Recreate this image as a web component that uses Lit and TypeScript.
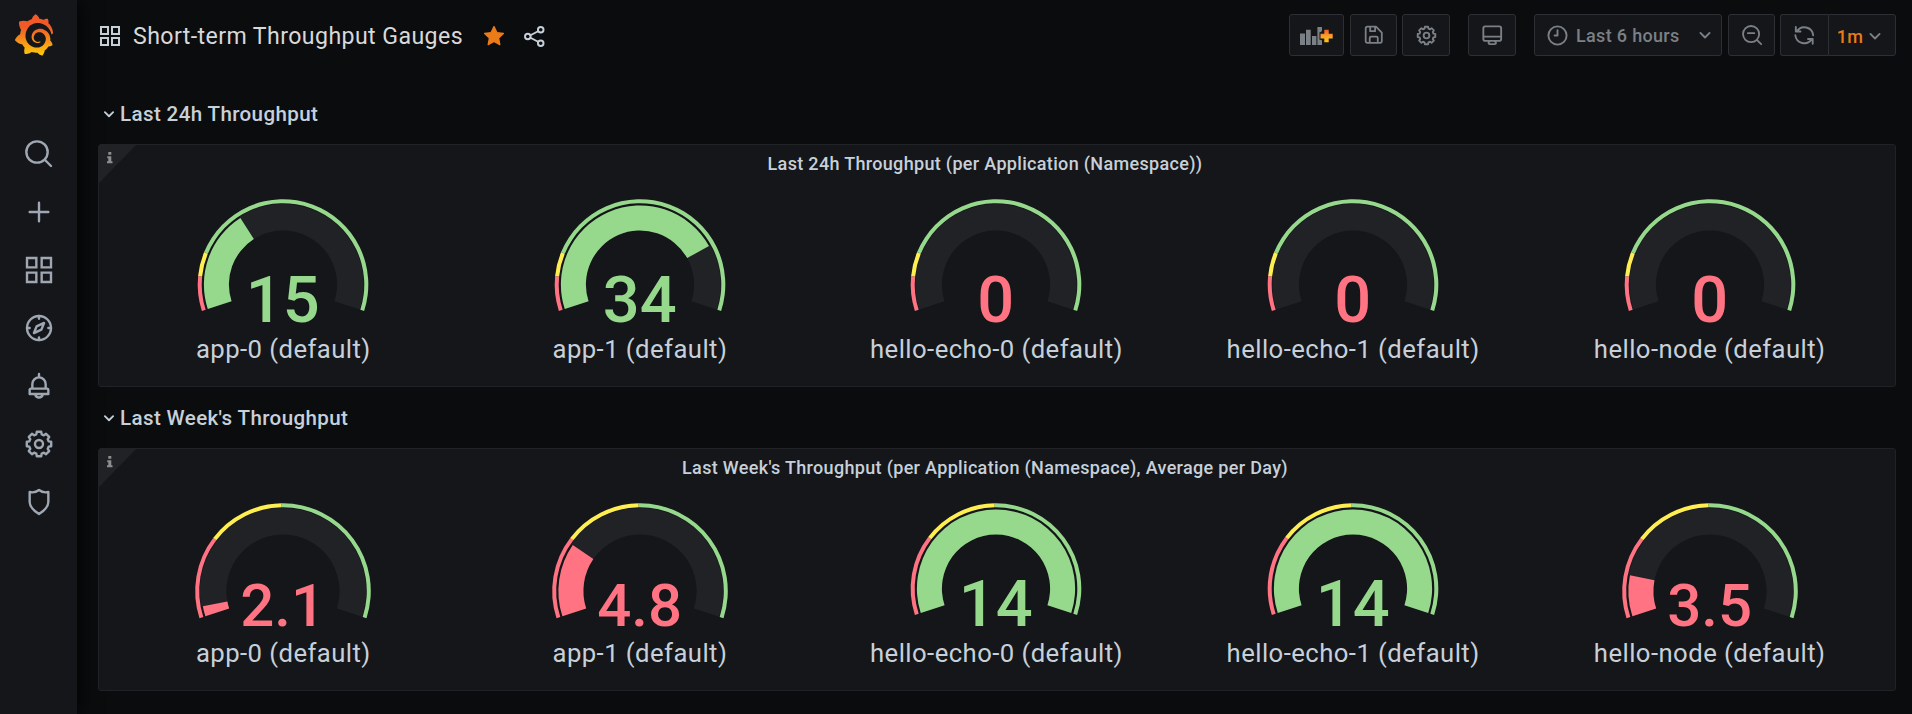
import { LitElement, html, svg, css } from 'lit';
import { customElement, property } from 'lit/decorators.js';

const RED = '#ff7383';
const YELLOW = '#ffee52';
const GREEN = '#96d98d';

type Gauge = { label: string; value: string; frac: number; color: string };
type Scale = { red: number; yellow: number };

// Point on the dial: fraction 0..1 sweeps 216 degrees starting 18 degrees below the left horizon.
const point = (r: number, f: number) => {
  const a = ((198 - 216 * f) * Math.PI) / 180;
  return `${(r * Math.cos(a)).toFixed(2)} ${(-r * Math.sin(a)).toFixed(2)}`;
};

const band = (outer: number, inner: number, from: number, to: number) => {
  const large = (to - from) * 216 > 180 ? 1 : 0;
  return `M${point(outer, from)}A${outer} ${outer} 0 ${large} 1 ${point(outer, to)}L${point(inner, to)}A${inner} ${inner} 0 ${large} 0 ${point(inner, from)}Z`;
};

const gearPath = () => {
  const pts: string[] = [];
  for (let i = 0; i < 8; i++) {
    const c = (i * 45 * Math.PI) / 180;
    for (const [d, r] of [[-0.27, 7.5], [-0.18, 9.3], [0.18, 9.3], [0.27, 7.5]]) {
      pts.push(`${(12 + r * Math.sin(c + d)).toFixed(2)} ${(12 - r * Math.cos(c + d)).toFixed(2)}`);
    }
  }
  return 'M' + pts.join('L') + 'Z';
};

const LOGO =
  'M342,161.2c-0.6-6.1-1.6-13.1-3.6-20.9c-2-7.7-5-16.2-9.4-25c-4.4-8.8-10.1-17.9-17.5-26.8c-2.9-3.5-6.1-6.9-9.5-10.2c5.1-20.3-6.2-37.9-6.2-37.9c-19.5-1.2-31.9,6.1-36.5,9.4c-0.8-0.3-1.5-0.7-2.3-1c-3.3-1.3-6.7-2.6-10.3-3.7c-3.5-1.1-7.1-2.1-10.8-3c-3.7-0.9-7.4-1.6-11.2-2.2c-0.7-0.1-1.3-0.2-2-0.3c-8.5-27.2-32.9-38.6-32.9-38.6c-27.3,17.3-32.4,41.5-32.4,41.5s-0.1,0.5-0.3,1.4c-1.5,0.4-3,0.9-4.5,1.3c-2.1,0.6-4.2,1.4-6.2,2.2c-2.1,0.8-4.1,1.6-6.2,2.5c-4.1,1.8-8.2,3.8-12.2,6c-3.9,2.2-7.7,4.6-11.4,7.1c-0.5-0.2-1-0.4-1-0.4c-37.8-14.4-71.3,2.9-71.3,2.9c-3.1,40.2,15.1,65.5,18.7,70.1c-0.9,2.5-1.7,5-2.5,7.5c-2.8,9.1-4.9,18.4-6.2,28.1c-0.2,1.4-0.4,2.8-0.5,4.2C18.8,192.7,8.5,228,8.5,228c29.1,33.5,63.1,35.6,63.1,35.6c0,0,0.1-0.1,0.1-0.1c4.3,7.7,9.3,15,14.9,21.9c2.4,2.9,4.8,5.6,7.4,8.3c-10.6,30.4,1.5,55.6,1.5,55.6c32.4,1.2,53.7-14.2,58.2-17.7c3.2,1.1,6.5,2.1,9.8,2.9c10,2.6,20.2,4.1,30.4,4.5c2.5,0.1,5.1,0.2,7.6,0.1l1.2,0l0.8,0l1.6,0l1.6-0.1l0,0.1c15.3,21.8,42.1,24.9,42.1,24.9c19.1-20.1,20.2-40.1,20.2-44.4l0,0c0,0,0-0.1,0-0.3c0-0.4,0-0.6,0-0.6l0,0c0-0.3,0-0.6,0-0.9c4-2.8,7.8-5.8,11.4-9.1c7.6-6.9,14.3-14.8,19.9-23.3c0.5-0.8,1-1.6,1.5-2.4c21.6,1.2,36.9-13.4,36.9-13.4c-3.6-22.5-16.4-33.5-19.1-35.6l0,0c0,0-0.1-0.1-0.3-0.2c-0.2-0.1-0.2-0.2-0.2-0.2c0,0,0,0,0,0c-0.1-0.1-0.3-0.2-0.5-0.3c0.1-1.4,0.2-2.7,0.3-4.1c0.2-2.4,0.2-4.9,0.2-7.3l0-1.8l0-0.9l0-0.5l-0.1-2.1l-0.1-2c0-0.7-0.1-1.3-0.2-1.9c-0.1-0.6-0.1-1.3-0.2-1.9l-0.2-1.9l-0.3-1.9c-0.4-2.5-0.8-4.9-1.4-7.4c-2.3-9.7-6.1-18.9-11-27.2c-5-8.3-11.2-15.6-18.3-21.8c-7-6.2-14.9-11.2-23.1-14.9c-8.3-3.7-16.9-6.1-25.5-7.2c-4.3-0.6-8.6-0.8-12.9-0.7l-3.2,0l-1.6,0.1c-0.6,0-1.2,0.1-1.7,0.1c-2.2,0.2-4.4,0.5-6.5,0.9c-8.6,1.6-16.7,4.7-23.8,9c-7.1,4.3-13.3,9.6-18.3,15.6c-5,6-8.9,12.7-11.6,19.6c-2.7,6.9-4.2,14.1-4.6,21c-0.1,1.7-0.1,3.5-0.1,5.2c0,0.4,0,0.9,0,1.3l0.1,1.4c0.1,0.8,0.1,1.7,0.2,2.5c0.3,3.5,1,6.9,1.9,10.1c1.9,6.5,4.9,12.4,8.6,17.4c3.7,5,8.2,9.1,12.9,12.4c4.7,3.2,9.8,5.5,14.8,7c5,1.5,10,2.1,14.7,2.1c1.2,0,2.4,0,3.5-0.1c3-0.2,5.6-0.7,8.2-1.6c2-0.7,4-1.5,5.7-2.4c1.8-0.9,3.4-2,5-3c0.4-0.3,0.9-0.6,1.3-1c1.6-1.3,1.9-3.7,0.6-5.3c-1.1-1.4-3.1-1.8-4.7-0.9c-0.4,0.2-0.8,0.4-1.2,0.6c-1.4,0.7-2.8,1.3-4.3,1.8c-1.5,0.5-3.1,0.9-4.7,1.2c-4,0.5-7,0.5-10.3,0.1c-3.7-0.5-7.4-1.6-10.9-3.2c-3.6-1.6-7-3.8-10.1-6.6c-3.1-2.8-5.8-6.1-7.9-9.9c-2.1-3.8-3.6-8-4.3-12.4c-0.3-2.2-0.5-4.5-0.4-6.7c0.1-2.4,0.3-4.7,0.7-7.1c1.7-9.6,6.5-19,13.9-26.1c1.9-1.8,3.9-3.4,6-4.9c2.1-1.5,4.4-2.8,6.8-3.9c2.4-1.1,4.8-2,7.4-2.7c2.5-0.7,5.1-1.1,7.8-1.4c2.7-0.2,5.4-0.3,8.2-0.1c2.9,0.2,5.7,0.6,8.5,1.3c5.6,1.2,11.1,3.3,16.2,6.1c10.2,5.7,18.9,14.5,24.2,25.1c2.7,5.3,4.6,11,5.5,16.9c0.5,3.7,0.8,7.3,0.7,10.9c-0.2,4.2-0.5,8.2-1.4,12.2c-0.3,1.6-0.7,3.2-1.1,4.7c-0.8,3.1-1.8,6.2-3,9.3c-2.4,6-5.6,11.8-9.4,17.1c-7.7,10.6-18.2,19.2-30.2,24.7c-6,2.7-12.3,4.7-18.8,5.7c-6.7,1-13,1.2-20,0.7c-7-0.5-13.9-1.8-20.7-3.7c-6.7-1.9-13.2-4.6-19.4-7.8c-12.3-6.6-23.4-15.6-32-26.5c-4.3-5.4-8.1-11.3-11.2-17.4c-3.1-6.1-5.6-12.6-7.4-19.1c-1.8-6.6-2.9-13.3-3.4-20.1c-0.4-6.8-0.2-13.5,0.7-20.5c0.4-3.4,1-6.9,1.7-10.3c0.7-3.4,1.5-6.8,2.5-10.2c1.9-6.7,4.3-13.2,7.1-19.3c5.7-12.2,13.1-23.1,22-31.8c2.2-2.2,4.5-4.2,6.9-6.2c2.4-1.9,4.9-3.7,7.5-5.4c2.5-1.7,5.2-3.2,7.9-4.6c8.8-4.5,17.4-7.5,26.7-9.5c9-1.8,18.3-2.8,29-2.7c5.8,0.2,11.5,0.9,17,1.9c11.1,2.1,21.5,5.6,31,10.3c9.5,4.6,17.9,10.3,25.3,16.5c3.6,3.1,7,6.2,10.2,9.7c3.1,3.3,6,6.6,8.6,10c5.2,6.7,9.4,13.5,12.7,19.9c3.3,6.5,5.7,12.2,7.7,18c1.5,4.4,2.6,8.3,3.5,11.7c0.3,1.4,1.6,2.3,3,2.1c1.5-0.1,2.6-1.3,2.6-2.8C342.6,170.4,342.5,166.1,342,161.2z';

const icons: Record<string, unknown> = {
  search: svg`<circle cx="10.5" cy="10.5" r="8"/><path d="M16.5 16.5l4.5 4.5"/>`,
  plus: svg`<path d="M12 5v14M5 12h14"/>`,
  apps: svg`<path d="M3 3h7v7H3zM14 3h7v7h-7zM3 14h7v7H3zM14 14h7v7h-7z" stroke-linejoin="miter"/>`,
  compass: svg`<circle cx="12" cy="12" r="9"/><path d="M12 3v2M12 19v2M3 12h2M19 12h2M15.8 8.2l-2 5L8.2 15.8l2-5z"/>`,
  bell: svg`<path d="M12 3v2M7 14v-3.5a5 5 0 0 1 10 0V14M6 14h12a1 1 0 0 1 1 1v3H5v-3a1 1 0 0 1 1-1zM9.2 18.5a2.9 2.9 0 0 0 5.6 0"/>`,
  gear: svg`<path d=${gearPath()} /><circle cx="12" cy="12" r="3"/>`,
  shield: svg`<path d="M12 3C10 4.5 7.5 5.1 5 4.5V12c0 3.6 3 6.5 7 9 4-2.5 7-5.4 7-9V4.5C16.5 5.1 14 4.5 12 3z"/>`,
  share: svg`<circle cx="5" cy="12" r="2.9"/><circle cx="18.5" cy="5" r="2.9"/><circle cx="18.5" cy="19" r="2.9"/><path d="M7.8 10.7l8-4.2M7.8 13.3l8 4.2"/>`,
  save: svg`<path d="M3 5a2 2 0 0 1 2-2h9.5L21 9.5V19a2 2 0 0 1-2 2H5a2 2 0 0 1-2-2zM8 3v5h5.5V3M7.5 21v-5.5a1.5 1.5 0 0 1 1.5-1.5h6a1.5 1.5 0 0 1 1.5 1.5V21"/>`,
  monitor: svg`<rect x="2.5" y="2.5" width="19" height="15.5" rx="2"/><path d="M3 13.5h18M9.5 18.5a1.5 1.5 0 0 0 0 3h5a1.5 1.5 0 0 0 0-3"/>`,
  clock: svg`<circle cx="12" cy="12" r="9.5"/><path d="M12 6.5V12H9"/>`,
  down: svg`<path d="M6.5 9.5l5.5 5.5 5.5-5.5"/>`,
  zoomout: svg`<circle cx="11" cy="11" r="8.8"/><path d="M17.5 17.5l4.5 4.5M7.5 10h7"/>`,
  sync: svg`<path d="M3 3v5h5M4 8A9.5 9.5 0 0 1 21.5 12M21 21v-5h-5M20 16A9.5 9.5 0 0 1 2.5 12"/>`,
};

const icon = (name: string, size: number, w = 2) => html`<svg
  class="icon"
  width=${size}
  height=${size}
  viewBox="0 0 24 24"
  fill="none"
  stroke="currentColor"
  stroke-width=${w}
  stroke-linejoin="round"
  stroke-linecap="round"
>${icons[name]}</svg>`;

@customElement('gauge-dial')
class GaugeDial extends LitElement {
  @property({ attribute: false }) gauge!: Gauge;
  @property({ attribute: false }) scale!: Scale;

  static styles = css`
    :host { display: flex; flex-direction: column; align-items: center; flex: 1 1 0; min-width: 0; }
    .dial { display: block; overflow: visible; }
    .value { font-family: Roboto, sans-serif; font-weight: 500; text-anchor: middle; letter-spacing: 0; }
    .label { font-size: 25.7px; letter-spacing: 0.017em; line-height: 39px; color: #c7d0d9; white-space: nowrap; }
  `;

  render() {
    const g = this.gauge;
    const s = this.scale;
    const decimal = g.value.includes('.');
    const R = decimal ? 87.8 : 85.3;
    const cy = R + 4.3;
    return html`
      <svg class="dial" width="200" height="135" viewBox="0 0 200 135">
        <g transform="translate(100 ${cy})">
          <path d=${band(R - 4.6, R - 31.2, 0, 1)} fill="#202226" />
          ${g.frac > 0
            ? svg`<path d=${band(R - 4, R - 6.2, 0, g.frac)} fill="#141619" /><path d=${band(R - 6.2, R - 31.2, 0, g.frac)} fill=${g.color} />`
            : ''}
          <path d=${band(R, R - 4, 0, s.red)} fill=${RED} />
          <path d=${band(R, R - 4, s.red, s.yellow)} fill=${YELLOW} />
          <path d=${band(R, R - 4, s.yellow, 1)} fill=${GREEN} />
        </g>
        <text class="value" x="99.7" y="127.3" font-size=${decimal ? 60 : 65} fill=${g.color}>${g.value}</text>
      </svg>
      <div class="label">${g.label}</div>
    `;
  }
}

@customElement('gauge-row')
class GaugeRow extends LitElement {
  @property() heading = '';
  @property() caption = '';
  @property({ attribute: false }) gauges: Gauge[] = [];
  @property({ attribute: false }) scale!: Scale;

  static styles = css`
    :host { display: block; }
    .heading { display: flex; align-items: center; height: 61px; padding-left: 2px; font-size: 20.57px; letter-spacing: 0.018em; font-weight: 500; color: #c7d0d9; box-sizing: border-box; }
    .heading .icon { margin-right: 2px; }
    .panel { position: relative; height: 243px; box-sizing: border-box; border: 1px solid #202226; border-radius: 3px; background: #141619; }
    .corner { position: absolute; left: 0; top: 0; }
    .caption { height: 39px; line-height: 38px; padding-right: 24px; text-align: center; font-size: 18px; letter-spacing: 0.018em; font-weight: 500; color: #c7d0d9; }
    .gauges { display: flex; padding: 11px 7px 0 6px; }
  `;

  render() {
    return html`
      <div class="heading">${icon('down', 18, 2.4)}<span>${this.heading}</span></div>
      <div class="panel">
        <svg class="corner" width="38" height="38" viewBox="0 0 38 38">
          <path d="M0 0H37L0 38Z" fill="#202226" />
          <path d="M9.3 7h3v2.700h-3zM8.3 11.200h4v5h1.200v2H8v-2h1.300v-3h-1z" fill="#8e8e8e" />
        </svg>
        <div class="caption">${this.caption}</div>
        <div class="gauges">
          ${this.gauges.map((g) => html`<gauge-dial .gauge=${g} .scale=${this.scale}></gauge-dial>`)}
        </div>
      </div>
    `;
  }
}

const day: Gauge[] = [
  { label: 'app-0 (default)', value: '15', frac: 0.349, color: GREEN },
  { label: 'app-1 (default)', value: '34', frac: 0.781, color: GREEN },
  { label: 'hello-echo-0 (default)', value: '0', frac: 0, color: RED },
  { label: 'hello-echo-1 (default)', value: '0', frac: 0, color: RED },
  { label: 'hello-node (default)', value: '0', frac: 0, color: RED },
];
const week: Gauge[] = [
  { label: 'app-0 (default)', value: '2.1', frac: 0.034, color: RED },
  { label: 'app-1 (default)', value: '4.8', frac: 0.243, color: RED },
  { label: 'hello-echo-0 (default)', value: '14', frac: 1, color: GREEN },
  { label: 'hello-echo-1 (default)', value: '14', frac: 1, color: GREEN },
  { label: 'hello-node (default)', value: '3.5', frac: 0.135, color: RED },
];

@customElement('app-root')
class AppRoot extends LitElement {
  static styles = css`
    :host { display: flex; height: 714px; overflow: hidden; background: #0b0c0e; color: #c7d0d9; font-family: Roboto, sans-serif; }
    svg { display: block; flex: none; }
    .side { position: relative; flex: none; width: 77px; box-sizing: border-box; padding-top: 14px; background: #141619; box-shadow: 0 0 20px #000; display: flex; flex-direction: column; align-items: center; }
    .logo { margin: 0 9px 0 0; }
    .menu { display: flex; flex-direction: column; gap: 26px; margin: 82px 0 0 0; color: #9fa7b3; }
    .main { flex: 1; min-width: 0; padding: 0 16px 0 21px; }
    .bar { height: 83px; box-sizing: border-box; padding-top: 14px; display: flex; align-items: flex-start; }
    .title { display: flex; align-items: center; height: 44px; font-size: 23.14px; letter-spacing: 0.018em; color: #d8d9da; }
    .name { margin: 0 20px 0 11px; white-space: nowrap; }
    .share { margin-left: 18px; color: #c7d0d9; }
    .grid { color: #c7d0d9; }
    .tools { margin-left: auto; display: flex; color: #7b8087; font-size: 18px; letter-spacing: 0.018em; font-weight: 500; }
    .btn { display: flex; align-items: center; justify-content: center; height: 42px; box-sizing: border-box; border: 1px solid #2c2f33; border-radius: 3px; background: #141619; }
    .b1 { width: 55px; margin-right: 6px; }
    .b2 { width: 47px; margin-right: 5px; }
    .b3 { width: 48px; }
    .gear { margin-right: 18px; }
    .view { margin-right: 18px; }
    .time { width: 188px; margin-right: 6px; justify-content: flex-start; padding-left: 11px; }
    .time span { margin: 0 15px 0 7px; white-space: nowrap; }
    .left { width: 48px; border-radius: 3px 0 0 3px; border-right: 0; }
    .right { width: 68px; border-radius: 0 3px 3px 0; gap: 2px; padding: 2px 2px 0 0; }
    .right span { color: #eb7b18; }
  `;

  render() {
    return html`
      <nav class="side">
        <svg class="logo" width="40" height="42" viewBox="0 0 351 365">
          <defs><linearGradient id="sun" gradientUnits="userSpaceOnUse" x1="175" y1="445" x2="175" y2="114"><stop offset="0" stop-color="#fff100" /><stop offset="1" stop-color="#f05a28" /></linearGradient></defs>
          <path fill="url(#sun)" d=${LOGO} />
        </svg>
        <div class="menu">
          ${['search', 'plus', 'apps', 'compass', 'bell', 'gear', 'shield'].map((n) => icon(n, 32, 1.8))}
        </div>
      </nav>
      <main class="main">
        <header class="bar">
          <div class="title">
            <span class="grid">${icon('apps', 24, 2)}</span>
            <span class="name">Short-term Throughput Gauges</span>
            <svg width="22" height="22" viewBox="0 0 24 24"><path fill="#eb7b18" stroke="#eb7b18" stroke-width="1.5" stroke-linejoin="round" d="M12 1.8l3.1 6.5 7.1 1-5.2 5 1.3 7.1L12 18l-6.3 3.4L7 14.3l-5.2-5 7.1-1z" /></svg>
            <span class="share">${icon('share', 23, 2)}</span>
          </div>
          <div class="tools">
            <div class="btn b1">
              <svg width="33" height="19" viewBox="0 0 33 19">
                <path fill="#7b8087" d="M0 7.5h5V19H0zM6 3.7h4.7V19H6zM12 10h4.4v9H12zM17.4 1H22v4l-1.8 1.6v6.5L22 14.5V19h-4.6z" />
                <defs><linearGradient id="plus" x1="0" y1="0" x2="0" y2="1"><stop offset="0" stop-color="#f05a28" /><stop offset=".5" stop-color="#fb9f2e" /><stop offset="1" stop-color="#fbca0a" /></linearGradient></defs>
                <path fill="#141619" d="M23 2.5h7v3.7h3v7.5h-3v4h-7v-4h-3.5V6.2H23z" />
                <path fill="url(#plus)" d="M24.3 3.8h4.4v4h4v4.600h-4V16.2h-4.4v-3.8h-3.8V7.8h3.8z" />
              </svg>
            </div>
            <div class="btn b2">${icon('save', 21.5)}</div>
            <div class="btn b3 gear">${icon('gear', 23)}</div>
            <div class="btn b3 view">${icon('monitor', 22.5)}</div>
            <div class="btn time">${icon('clock', 23)}<span>Last 6 hours</span>${icon('down', 20, 2.3)}</div>
            <div class="btn b2">${icon('zoomout', 22)}</div>
            <div class="btn left">${icon('sync', 22.5)}</div>
            <div class="btn right"><span>1m</span>${icon('down', 20, 2.3)}</div>
          </div>
        </header>
        <gauge-row heading="Last 24h Throughput" caption="Last 24h Throughput (per Application (Namespace))" .gauges=${day} .scale=${{ red: 0.11, yellow: 0.187 }}></gauge-row>
        <gauge-row heading="Last Week's Throughput" caption="Last Week's Throughput (per Application (Namespace), Average per Day)" .gauges=${week} .scale=${{ red: 0.256, yellow: 0.496 }}></gauge-row>
      </main>
    `;
  }
}
